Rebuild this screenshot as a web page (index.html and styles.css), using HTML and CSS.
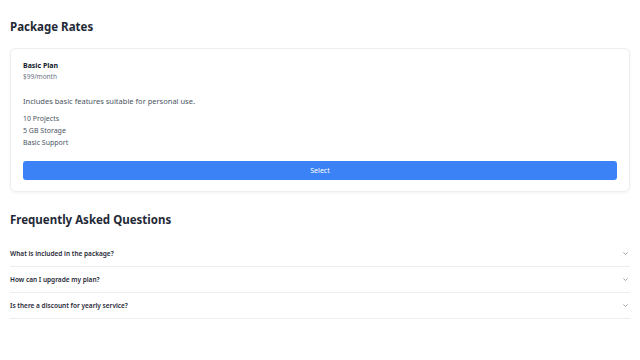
FILE: index.html
```
<!DOCTYPE html>
<html lang="en">
<head>
    <meta charset="UTF-8">
    <meta name="viewport" content="width=device-width, initial-scale=1.0">
    <title>Package Rates</title>
    <link rel="stylesheet" href="styles.css">
</head>
<body>
    <h2 class="section-title">Package Rates</h2>
    <div class="plan-card">
        <h3 class="plan-name">Basic Plan</h3>
        <p class="plan-price">$99/month</p>
        <p class="plan-desc">Includes basic features suitable for personal use.</p>
        <ul class="plan-features">
            <li>10 Projects</li>
            <li>5 GB Storage</li>
            <li>Basic Support</li>
        </ul>
        <button class="plan-button">Select</button>
    </div>

    <h2 class="section-title">Frequently Asked Questions</h2>
    <div class="faq">
        <div class="faq-item">
            <span>What is included in the package?</span>
            <svg class="chevron" viewBox="0 0 10 10"><path d="M2 3.5 L5 6.5 L8 3.5"/></svg>
        </div>
        <div class="faq-item">
            <span>How can I upgrade my plan?</span>
            <svg class="chevron" viewBox="0 0 10 10"><path d="M2 3.5 L5 6.5 L8 3.5"/></svg>
        </div>
        <div class="faq-item">
            <span>Is there a discount for yearly service?</span>
            <svg class="chevron" viewBox="0 0 10 10"><path d="M2 3.5 L5 6.5 L8 3.5"/></svg>
        </div>
    </div>
</body>
</html>
```
FILE: styles.css
```
body {
    margin: 0;
    padding: 10px;
    font-family: "Noto Sans", "Open Sans", sans-serif;
    color: #1f2937;
    background-color: #fff;
}
.section-title {
    margin: 9px 0 13px;
    font-size: 11.5px;
    line-height: 16px;
    font-weight: 700;
    color: #1f2937;
}
.plan-card {
    border: 1px solid #eceef1;
    border-radius: 6px;
    padding: 12px 12px 11px;
    box-shadow: 0 1px 3px rgba(0, 0, 0, 0.06);
    margin-bottom: 20px;
}
.plan-name {
    margin: 0;
    font-size: 7px;
    line-height: 10px;
    font-weight: 700;
    color: #111827;
}
.plan-price {
    margin: 1px 0 0;
    font-size: 6.5px;
    line-height: 10px;
    color: #6b7280;
}
.plan-desc {
    margin: 14px 0 0;
    font-size: 7.5px;
    line-height: 10px;
    color: #4b5563;
}
.plan-features {
    list-style: none;
    margin: 7px 0 0;
    padding: 0;
    font-size: 7px;
    line-height: 12px;
    color: #4b5563;
}
.plan-button {
    display: block;
    width: 100%;
    height: 19px;
    margin-top: 12px;
    border: none;
    border-radius: 3px;
    background-color: #3b82f6;
    color: #fff;
    font-family: inherit;
    font-size: 7px;
    cursor: pointer;
}
.faq-item {
    display: flex;
    justify-content: space-between;
    align-items: center;
    padding: 7.5px 0 7.5px;
    border-bottom: 1px solid #eceef1;
    font-size: 6.5px;
    line-height: 10px;
    font-weight: 600;
    color: #1f2937;
}
.chevron {
    width: 7px;
    height: 7px;
    margin-right: 1px;
    fill: none;
    stroke: #8b929c;
    stroke-width: 1.2;
}
```
